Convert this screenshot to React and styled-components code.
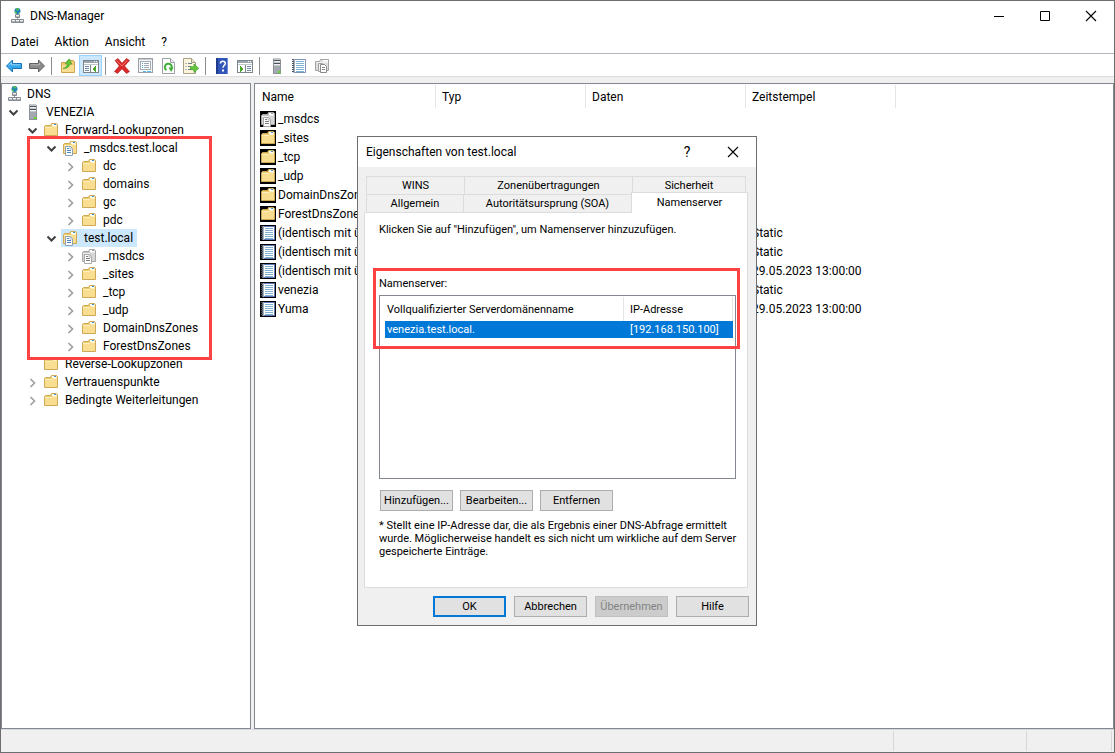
import { useState } from "react"
import styled, { createGlobalStyle } from "styled-components"

const GlobalStyle = createGlobalStyle`
*, *::before, *::after{
  box-sizing: border-box;
}
body{
  margin: 0;
  background: #fff;
  color: #000;
  font-family: Roboto, "Open Sans", sans-serif;
  font-size: 12px;
}
button{
  margin: 0;
  padding: 0;
  border: 0;
  background: none;
  color: inherit;
  font: inherit;
}
`

/* ---------- Icons ---------- */

const Svg = styled.svg`
  display: block;
  flex: none;
  width: 16px;
  height: 16px;
`

const DnsIcon = () => (
  <Svg viewBox="-1 0 16 16">
    <path d="M8.500 5.500v3M8.500 10v2M3.500 13.500h10" fill="none" stroke="#9aa0a5" />
    <circle cx="8.500" cy="3" r="3" fill="#1d7fc0" />
    <path d="M7 .4c1.500-.6 3 0 3.400 1L9 2.800 7.500 2.200zM5.700 3l2.300 1-.5 2C6.500 5.500 5.600 4.500 5.700 3zM10 3.700l1.300.3-1.600 1.500z" fill="#4fc04e" />
    <path d="M6.500 6.500h4v3h-4zM2.500 11.500h4v3h-4zM6.500 11.500h4v3h-4zM10.500 11.500h4v3h-4z" fill="#eef0f2" stroke="#858b91" />
    <path d="M7 8.500h3M3 13.500h3M7 13.500h3M11 13.500h3" stroke="#b4b9bd" />
  </Svg>
)

const ServerIcon = () => (
  <Svg viewBox="0 0 16 16">
    <path d="M5 .5h7l1 1V16H5z" fill="#8c9297" />
    <path d="M6 1h6v14H6z" fill="#c3c8cb" />
    <path d="M6 2.500h6M6 5.500h6" stroke="#4c5358" />
    <path d="M6 3.500h6M6 6.500h6" stroke="#eef0f1" />
    <path d="M6 8h6v7H6z" fill="#a3a9ae" />
    <path d="M10 13h2.500v2H10z" fill="#65d82c" />
  </Svg>
)

const FolderShape = ({ gray }) => (
  <g>
    <path
      d="M1.500 13.500V4.500l1-1h5l1-2h5l1 1v11z"
      fill={gray ? "#c4c4c4" : "#eecb6d"}
      stroke={gray ? "#a6a6a6" : "#cfa954"}
    />
    <path d="M9 2h4.500v2H9z" fill="#fff" />
    <path d="M11 2h2v1h-2z" fill={gray ? "#999" : "#3b8ed8"} />
    <path d="M2 5h7l1-1h4v9H2z" fill={gray ? "#d6d6d6" : "#f9de91"} />
    <path d="M2 5.500h7l1-1h4" fill="none" stroke={gray ? "#ececec" : "#fff0bd"} />
  </g>
)

const FolderIcon = () => (
  <Svg viewBox="0 0 16 16">
    <FolderShape />
  </Svg>
)

const ZoneIcon = ({ gray }) => (
  <Svg viewBox="0 0 16 16">
    <FolderShape gray={gray} />
    <path d="M3.500 6.500h5l2 2v7h-7z" fill="#fff" stroke={gray ? "#a8a8a8" : "#8fa0b2"} />
    <path d="M8 6.500V9h2.500" fill="none" stroke={gray ? "#b5b5b5" : "#a9b6c3"} />
    <path d="M5 8.500h2M5 10.500h4M5 12.500h4" stroke={gray ? "#7d7d7d" : "#4b87bd"} />
  </Svg>
)

const RecordIcon = ({ plain }) => (
  <Svg viewBox="0 0 16 16">
    <path d="M2.500 1.500h12v13h-12z" fill="#fff" stroke={plain ? "#7b93b5" : "#6178b8"} />
    <path d="M5 3.500h8M5 5.500h8M5 7.500h8M5 9.500h8M5 11.500h8M5 13.500h8" stroke="#7fb0cf" />
    <path d="M2.500 1v14" stroke="#50565c" strokeWidth="3" strokeDasharray="1 1" />
    <path d="M3.500 1v14" stroke="#a9afb4" />
  </Svg>
)

const ArrowIcon = ({ forward }) => (
  <Svg viewBox="0 0 16 16">
    <path
      d={forward ? "M15.500 8 9.500 2v3.500h-9v5h9V14z" : "M.5 8l6-6v3.500h9v5h-9V14z"}
      fill={forward ? "#8b8b8b" : "#36a7ea"}
      stroke={forward ? "#626262" : "#1874b8"}
    />
    <path d={forward ? "M2 6.800h8.500V5" : "M2.500 7.500 5.500 4.700v2.100H14"} fill="none" stroke={forward ? "#b9b9b9" : "#8ed6fb"} />
  </Svg>
)

const UpIcon = () => (
  <Svg viewBox="0 0 16 16">
    <path d="M1.500 14.500v-10h5l1-2h6l1 1v11z" fill="#f0c871" stroke="#cfa550" />
    <path d="M2 7h12v7H2z" fill="#f9dd92" />
    <path d="M3 10.500c2.500-.5 4-2 4.300-4.500L5.200 5.500 9.300.8l2.500 5.400-2-.3C9.300 9 6.500 11 3 10.500z" fill="#62c63b" stroke="#3a9320" strokeWidth=".6" />
  </Svg>
)

const PaneIcon = ({ right }) => (
  <Svg viewBox="0 0 16 16" shapeRendering="crispEdges">
    <path d="M.5 2.500h15v12H.5z" fill="#fff" stroke="#7c848c" />
    <path d="M1 3h14v2H1z" fill="#9ca5ad" />
    <path d="M11 3.500h1M13 3.500h1" stroke="#fff" />
    <path d="M1 6.500h14" stroke="#c2c7cc" />
    <path d={right ? "M8.500 7v8" : "M7.500 7v8"} stroke="#7c848c" />
    <path
      d={right ? "M10 8.500h4M10 10.500h4M10 12.500h4" : "M2 8.500h4M2 10.500h4M2 12.500h4"}
      stroke="#6f87a0"
    />
    <path d={right ? "M3 8l4 3-4 3z" : "M13 8l-4 3 4 3z"} fill="#4aaa27" />
  </Svg>
)

const DeleteIcon = () => (
  <Svg viewBox="0 0 16 16">
    <path
      d="M1 2.500 4 .5l4 4.800L12.500.5l3 2-5 5.500 5 5.500-3 2L8 10.800l-4.500 4.700-3-2L5.300 8z"
      fill="#dc2a2a"
      stroke="#a81414"
      strokeWidth=".6"
    />
    <path d="M2.500 2.300 8 8l5-5.500" fill="none" stroke="#f47a70" />
  </Svg>
)

const PropsIcon = () => (
  <Svg viewBox="0 0 16 16" shapeRendering="crispEdges">
    <path d="M1.500.5h14v14h-14z" fill="#f3f5f6" stroke="#9aa1a8" />
    <path d="M2 1h13v1H2z" fill="#c6ccd2" />
    <path d="M3.500 3.500h10v8h-10z" fill="#fff" stroke="#a6adb4" />
    <path d="M5 5.500h1M5 7.500h1M5 9.500h1" stroke="#4aa9dc" />
    <path d="M7 5.500h5M7 7.500h5M7 9.500h5" stroke="#9ba7b3" />
    <path d="M6 13h3v1H6zM10 13h4v1h-4z" fill="#59b9ea" />
  </Svg>
)

const RefreshIcon = () => (
  <Svg viewBox="0 0 16 16">
    <path d="M2.500.5h8l4 4v11h-12z" fill="#fff" stroke="#9aa0a5" />
    <path d="M10.500.5v4h4" fill="#e8ebed" stroke="#9aa0a5" />
    <path d="M6.500 12.200A3.500 3.500 0 1 1 11.300 11" fill="none" stroke="#3fae35" strokeWidth="2" />
    <path d="M8.500 9.500h5L11.200 14z" fill="#3fae35" />
  </Svg>
)

const ExportIcon = () => (
  <Svg viewBox="0 0 16 16">
    <path d="M.5.5h8l4 4v11H.5z" fill="#fdf6dc" stroke="#a79f86" />
    <path d="M8.500.5v4h4" fill="#efe6c4" stroke="#a79f86" />
    <path d="M2.500 5.500h1M5 5.500h4M2.500 8.500h1M5 8.500h3M2.500 11.500h1M5 11.500h3" stroke="#6a7f99" />
    <path d="M7.500 8.800h3.500V6l4.700 4.300L11 14.500v-2.800H7.500z" fill="#67c93f" stroke="#3d9a22" strokeWidth=".7" />
  </Svg>
)

const HelpIcon = () => (
  <Svg viewBox="0 0 16 16">
    <path d="M2 0h12v16H2z" fill="#3155b8" />
    <path d="M2 0h2v16H2z" fill="#1f3b8c" />
    <path d="M13.500 0v16" stroke="#6f8bdc" />
    <path d="M6.500 5.500C6.500 2.500 11.500 2.500 11.300 5.500 11.200 7.300 9 7.300 9 9.800" fill="none" stroke="#fff" strokeWidth="1.600" />
    <path d="M8 11.500h2v2H8z" fill="#fff" />
  </Svg>
)

const CopyIcon = () => (
  <Svg viewBox="0 0 16 16">
    <path d="M1.500 12.500v-9h4l1-2h8v11z" fill="#dedede" stroke="#a3a3a3" />
    <path d="M9 2h5v1.500H9z" fill="#fff" />
    <path d="M2 4.500h12" stroke="#f2f2f2" />
    <path d="M4.500 5.500h4v8h-4z" fill="#f4f4f4" stroke="#a0a0a0" />
    <path d="M6.500 6.500h4l2 2v6h-6z" fill="#fff" stroke="#8a8a8a" />
    <path d="M8 9.500h3M8 11.500h3" stroke="#8a8a8a" />
  </Svg>
)

const Chevron = ({ open }) => (
  <Svg viewBox="0 0 16 16">
    <path
      d={open ? "M4.500 6.500l4 4 4-4" : "M6.500 5l4 4-4 4"}
      fill="none"
      stroke={open ? "#404040" : "#a0a0a0"}
      strokeWidth={open ? "2" : "1.700"}
    />
  </Svg>
)

const CloseIcon = () => (
  <Svg viewBox="0 0 16 16">
    <path d="M3 3l10 10M13 3 3 13" stroke="#000" strokeWidth="1.100" />
  </Svg>
)

const MinIcon = () => (
  <Svg viewBox="0 0 16 16">
    <path d="M3 8.500h10" stroke="#000" />
  </Svg>
)

const MaxIcon = () => (
  <Svg viewBox="0 0 16 16">
    <path d="M3.500 3.500h9v9h-9z" fill="none" stroke="#000" />
  </Svg>
)

const icons = {
  dns: <DnsIcon />,
  server: <ServerIcon />,
  folder: <FolderIcon />,
  zone: <ZoneIcon />,
  grayZone: <ZoneIcon gray />,
  record: <RecordIcon />,
}

/* ---------- Data ---------- */

const topNodes = [
  { level: 0, icon: "dns", label: "DNS" },
  { level: 1, icon: "server", label: "VENEZIA", state: "open" },
  { level: 2, icon: "folder", label: "Forward-Lookupzonen", state: "open" },
]

const zoneNodes = [
  { level: 3, icon: "zone", label: "_msdcs.test.local", state: "open" },
  { level: 4, icon: "folder", label: "dc", state: "closed" },
  { level: 4, icon: "folder", label: "domains", state: "closed" },
  { level: 4, icon: "folder", label: "gc", state: "closed" },
  { level: 4, icon: "folder", label: "pdc", state: "closed" },
  { level: 3, icon: "zone", label: "test.local", state: "open" },
  { level: 4, icon: "grayZone", label: "_msdcs", state: "closed" },
  { level: 4, icon: "folder", label: "_sites", state: "closed" },
  { level: 4, icon: "folder", label: "_tcp", state: "closed" },
  { level: 4, icon: "folder", label: "_udp", state: "closed" },
  { level: 4, icon: "folder", label: "DomainDnsZones", state: "closed" },
  { level: 4, icon: "folder", label: "ForestDnsZones", state: "closed" },
]

const bottomNodes = [
  { level: 2, icon: "folder", label: "Reverse-Lookupzonen" },
  { level: 2, icon: "folder", label: "Vertrauenspunkte", state: "closed" },
  { level: 2, icon: "folder", label: "Bedingte Weiterleitungen", state: "closed" },
]

const parentName = "(identisch mit ü..."

const records = [
  { icon: "grayZone", name: "_msdcs" },
  { icon: "folder", name: "_sites" },
  { icon: "folder", name: "_tcp" },
  { icon: "folder", name: "_udp" },
  { icon: "folder", name: "DomainDnsZones" },
  { icon: "folder", name: "ForestDnsZones" },
  { icon: "record", name: parentName, time: "Static" },
  { icon: "record", name: parentName, time: "Static" },
  { icon: "record", name: parentName, time: "29.05.2023 13:00:00" },
  { icon: "record", name: "venezia", time: "Static" },
  { icon: "record", name: "Yuma", time: "29.05.2023 13:00:00" },
]

const tools = [
  { label: "Zurück", icon: <ArrowIcon /> },
  { label: "Vorwärts", icon: <ArrowIcon forward /> },
  null,
  { label: "Eine Ebene nach oben", icon: <UpIcon /> },
  { label: "Konsolenstruktur", icon: <PaneIcon />, active: true },
  null,
  { label: "Löschen", icon: <DeleteIcon /> },
  { label: "Eigenschaften", icon: <PropsIcon /> },
  { label: "Aktualisieren", icon: <RefreshIcon /> },
  { label: "Liste exportieren", icon: <ExportIcon /> },
  null,
  { label: "Hilfe", icon: <HelpIcon /> },
  { label: "Aktionsbereich", icon: <PaneIcon right /> },
  null,
  { label: "Neuer Server", icon: <ServerIcon /> },
  { label: "Neuer Eintrag", icon: <RecordIcon plain /> },
  { label: "Neue Zone", icon: <CopyIcon /> },
]

/* ---------- Components ---------- */

const TreeNode = ({ node, selected, onSelect }) => (
  <TreeRow $level={node.level}>
    {node.level > 0 && (
      <Toggle>
        {node.state && <Chevron open={node.state === "open"} />}
      </Toggle>
    )}
    <TreeEntry type="button" $selected={selected} onClick={() => onSelect(node.label)}>
      {icons[node.icon]}
      {node.label}
    </TreeEntry>
  </TreeRow>
)

const Properties = () => {
  const [tab, setTab] = useState("Namenserver")

  const renderTab = (name, size) => (
    <Tab
      type="button"
      role="tab"
      aria-selected={tab === name}
      $size={size}
      $active={tab === name}
      onClick={() => setTab(name)}
    >
      {name}
    </Tab>
  )

  return (
    <Dialog role="dialog" aria-labelledby="dialog-title">
      <DialogTitle>
        <DialogName id="dialog-title">Eigenschaften von test.local</DialogName>
        <TitleButton type="button" aria-label="Direkthilfe">?</TitleButton>
        <TitleButton type="button" aria-label="Schließen"><CloseIcon /></TitleButton>
      </DialogTitle>
      <DialogBody>
        <Tabs role="tablist">
          <TabRow>
            {renderTab("WINS", 98)}
            {renderTab("Zonenübertragungen", 168)}
            {renderTab("Sicherheit", 114)}
          </TabRow>
          <TabRow>
            {renderTab("Allgemein", 97)}
            {renderTab("Autoritätsursprung (SOA)", 168)}
            {renderTab("Namenserver", 117)}
          </TabRow>
        </Tabs>
        <Panel role="tabpanel">
          <Hint>Klicken Sie auf "Hinzufügen", um Namenserver hinzuzufügen.</Hint>
          <MarkedServers>
            <ServerLabel id="server-label">Namenserver:</ServerLabel>
          </MarkedServers>
          <ServerBox>
            <ServerTable aria-labelledby="server-label">
              <colgroup>
                <col />
                <col width="109" />
              </colgroup>
              <thead>
                <tr>
                  <th>Vollqualifizierter Serverdomänenname</th>
                  <th>IP-Adresse</th>
                </tr>
              </thead>
              <tbody>
                <tr>
                  <td>venezia.test.local.</td>
                  <td>[192.168.150.100]</td>
                </tr>
              </tbody>
            </ServerTable>
          </ServerBox>
          <Actions>
            <PushButton type="button">Hinzufügen...</PushButton>
            <PushButton type="button">Bearbeiten...</PushButton>
            <PushButton type="button">Entfernen</PushButton>
          </Actions>
          <Note>
            * Stellt eine IP-Adresse dar, die als Ergebnis einer DNS-Abfrage ermittelt
            wurde. Möglicherweise handelt es sich nicht um wirkliche auf dem Server
            gespeicherte Einträge.
          </Note>
        </Panel>
        <Footer>
          <PushButton type="button" $primary>OK</PushButton>
          <PushButton type="button">Abbrechen</PushButton>
          <PushButton type="button" disabled>Übernehmen</PushButton>
          <PushButton type="button">Hilfe</PushButton>
        </Footer>
      </DialogBody>
    </Dialog>
  )
}

const App = () => {
  const [selected, setSelected] = useState("test.local")

  const renderNode = (node, i) => (
    <TreeNode
      key={i}
      node={node}
      selected={node.label === selected}
      onSelect={setSelected}
    />
  )

  return (
    <Window>
      <GlobalStyle />
      <TitleBar>
        <DnsIcon />
        <AppName>DNS-Manager</AppName>
        <TitleButton type="button" aria-label="Minimieren"><MinIcon /></TitleButton>
        <TitleButton type="button" aria-label="Maximieren"><MaxIcon /></TitleButton>
        <TitleButton type="button" aria-label="Schließen"><CloseIcon /></TitleButton>
      </TitleBar>
      <MenuBar>
        <button type="button">Datei</button>
        <button type="button">Aktion</button>
        <button type="button">Ansicht</button>
        <button type="button">?</button>
      </MenuBar>
      <ToolBar>
        {tools.map((tool, i) =>
          tool ? (
            <Tool key={i} type="button" aria-label={tool.label} $active={tool.active}>
              {tool.icon}
            </Tool>
          ) : (
            <Divider key={i} />
          )
        )}
      </ToolBar>
      <Panes>
        <TreePane>
          {topNodes.map(renderNode)}
          <MarkedZones>{zoneNodes.map(renderNode)}</MarkedZones>
          {bottomNodes.map(renderNode)}
        </TreePane>
        <ListPane>
          <RecordTable>
            <colgroup>
              <col width="181" />
              <col width="150" />
              <col width="160" />
              <col width="150" />
              <col />
            </colgroup>
            <thead>
              <tr>
                <th>Name</th>
                <th>Typ</th>
                <th>Daten</th>
                <th>Zeitstempel</th>
                <td />
              </tr>
            </thead>
            <tbody>
              {records.map((record, i) => (
                <tr key={i}>
                  <td>
                    <RecordName>
                      <RecordBadge>{icons[record.icon]}</RecordBadge>
                      {record.name}
                    </RecordName>
                  </td>
                  <td />
                  <td />
                  <td>{record.time}</td>
                  <td />
                </tr>
              ))}
            </tbody>
          </RecordTable>
        </ListPane>
      </Panes>
      <StatusBar>
        <StatusCell $grow />
        <StatusCell $size={133} />
        <StatusCell $size={85} />
      </StatusBar>
      <Properties />
    </Window>
  )
}

/* ---------- Styles ---------- */

const Window = styled.div`
  position: relative;
  display: flex;
  flex-direction: column;
  min-height: 100vh;
  border: 1px solid #6e6e70;
  background: #fff;
`

const TitleBar = styled.header`
  display: flex;
  align-items: center;
  height: 30px;
  padding-left: 7px;
`

const AppName = styled.h1`
  flex: 1;
  margin: 0 0 0 6px;
  font-size: 12px;
  font-weight: 400;
`

const TitleButton = styled.button`
  display: flex;
  align-items: center;
  justify-content: center;
  width: 46px;
  height: 100%;
  font-size: 14px;
`

const MenuBar = styled.nav`
  display: flex;
  align-items: center;
  gap: 16px;
  height: 22px;
  padding-left: 10px;
`

const ToolBar = styled.div`
  display: flex;
  align-items: center;
  height: 24px;
  padding: 1px 0 0 1px;
  border-top: 1px solid #b5b5bd;
  border-bottom: 1px solid #dcdcdc;
`

const Tool = styled.button`
  display: flex;
  align-items: center;
  justify-content: center;
  width: 23px;
  height: 21px;
  border: 1px solid ${(p) => (p.$active ? "#99d1ff" : "transparent")};
  background: ${(p) => (p.$active ? "#cce8ff" : "none")};
`

const Divider = styled.span`
  width: 1px;
  height: 18px;
  margin: 0 4px 0 3px;
  background: #8c8c8c;
`

const Panes = styled.main`
  flex: 1;
  display: flex;
  gap: 3px;
  padding-top: 6px;
  background: #f0f0f0;
`

const TreePane = styled.nav`
  flex: none;
  width: 250px;
  padding-top: 1px;
  border: 1px solid #828790;
  background: #fff;
`

const ListPane = styled.section`
  flex: 1;
  min-width: 0;
  border: 1px solid #828790;
  background: #fff;
`

const TreeRow = styled.div`
  display: flex;
  align-items: center;
  height: 18px;
  padding-left: ${(p) => (p.$level > 0 ? 3 + (p.$level - 1) * 19 : 2)}px;
`

const Toggle = styled.span`
  width: 18px;
`

const TreeEntry = styled.button`
  display: flex;
  align-items: center;
  gap: 6px;
  height: 18px;
  padding: 0 4px 0 1px;
  background: ${(p) => (p.$selected ? "#cce8ff" : "none")};
  white-space: nowrap;
`

const MarkedZones = styled.div`
  position: relative;
  &::after{
    content: "";
    position: absolute;
    top: -3px;
    bottom: -5px;
    left: 25px;
    width: 185px;
    border: 3px solid #fc4242;
    pointer-events: none;
  }
`

const RecordTable = styled.table`
  width: 100%;
  table-layout: fixed;
  border-collapse: separate;
  border-spacing: 0;
  text-align: left;
  th, td{
    padding: 0 6px;
    font-weight: 400;
    white-space: nowrap;
  }
  thead th{
    height: 25px;
    background: linear-gradient(#e5e5e5, #e5e5e5) right center / 1px 23px no-repeat;
  }
  thead th:first-child{
    padding-left: 7px;
  }
  tbody td{
    height: 19px;
  }
  tbody td:first-child{
    padding: 0 0 0 5px;
  }
`

const RecordName = styled.span`
  display: flex;
  align-items: center;
  gap: 2px;
  overflow: hidden;
`

const RecordBadge = styled.span`
  background: #000;
`

const StatusBar = styled.footer`
  display: flex;
  height: 23px;
  padding: 1px 2px 1px 0;
  border-top: 1px solid #d7d7df;
  background: #f0f0f0;
`

const StatusCell = styled.span`
  flex: ${(p) => (p.$grow ? "1" : `0 0 ${p.$size}px`)};
  border-right: 1px solid #d7d7d7;
`

const Dialog = styled.section`
  position: absolute;
  top: 135px;
  left: 356px;
  width: 400px;
  border: 1px solid #6e6e70;
  background: #f0f0f0;
`

const DialogTitle = styled.header`
  display: flex;
  align-items: center;
  height: 30px;
  padding-left: 8px;
  background: #fff;
`

const DialogName = styled.h2`
  flex: 1;
  margin: 0;
  font-size: 12px;
  font-weight: 400;
`

const DialogBody = styled.div`
  padding: 9px 7px 8px 6px;
  font-size: 11px;
`

const Tabs = styled.div`
  padding-left: 2px;
`

const TabRow = styled.div`
  display: flex;
  height: 18px;
`

const Tab = styled.button`
  position: relative;
  width: ${(p) => p.$size}px;
  height: ${(p) => (p.$active ? 21 : 18)}px;
  margin-top: ${(p) => (p.$active ? -2 : 0)}px;
  padding-bottom: ${(p) => (p.$active ? 2 : 0)}px;
  border: 1px solid #dcdcdc;
  border-width: 1px 0 0 1px;
  background: ${(p) => (p.$active ? "#fff" : "#f0f0f0")};
  &:last-child{
    border-right-width: 1px;
  }
`

const Panel = styled.div`
  margin-right: 1px;
  padding: 10px 11px 29px 14px;
  border: 1px solid #dcdcdc;
  background: #fff;
`

const Hint = styled.p`
  margin: 0;
  line-height: 13px;
`

const MarkedServers = styled.div`
  position: relative;
  padding: 41px 0 5px;
  &::after{
    content: "";
    position: absolute;
    z-index: 1;
    top: 32px;
    left: -6px;
    right: -4px;
    height: 81px;
    border: 3px solid #fc4242;
    pointer-events: none;
  }
`

const ServerLabel = styled.div`
  line-height: 13px;
`

const ServerBox = styled.div`
  min-height: 184px;
  padding: 1px 2px 1px 5px;
  border: 1px solid #828790;
`

const ServerTable = styled.table`
  width: 100%;
  table-layout: fixed;
  border-collapse: separate;
  border-spacing: 0;
  text-align: left;
  th, td{
    padding: 0 0 0 2px;
    font-weight: 400;
    white-space: nowrap;
  }
  th{
    height: 24px;
    border-right: 1px solid #e5e5e5;
  }
  th + th, td + td{
    padding-left: 6px;
  }
  td{
    height: 17px;
    background: #0078d7;
    color: #fff;
  }
`

const Actions = styled.div`
  display: flex;
  gap: 7px;
  padding: 11px 0 8px 1px;
`

const PushButton = styled.button`
  width: 73px;
  height: 21px;
  border: ${(p) => (p.$primary ? "2px solid #0078d7" : "1px solid #adadad")};
  background: #e1e1e1;
  &:disabled{
    border-color: #bfbfbf;
    background: #ccc;
    color: #838383;
  }
`

const Note = styled.p`
  margin: 0 -8px 0 0;
  line-height: 13px;
`

const Footer = styled.div`
  display: flex;
  justify-content: flex-end;
  gap: 8px;
  padding-top: 8px;
`

export default App
